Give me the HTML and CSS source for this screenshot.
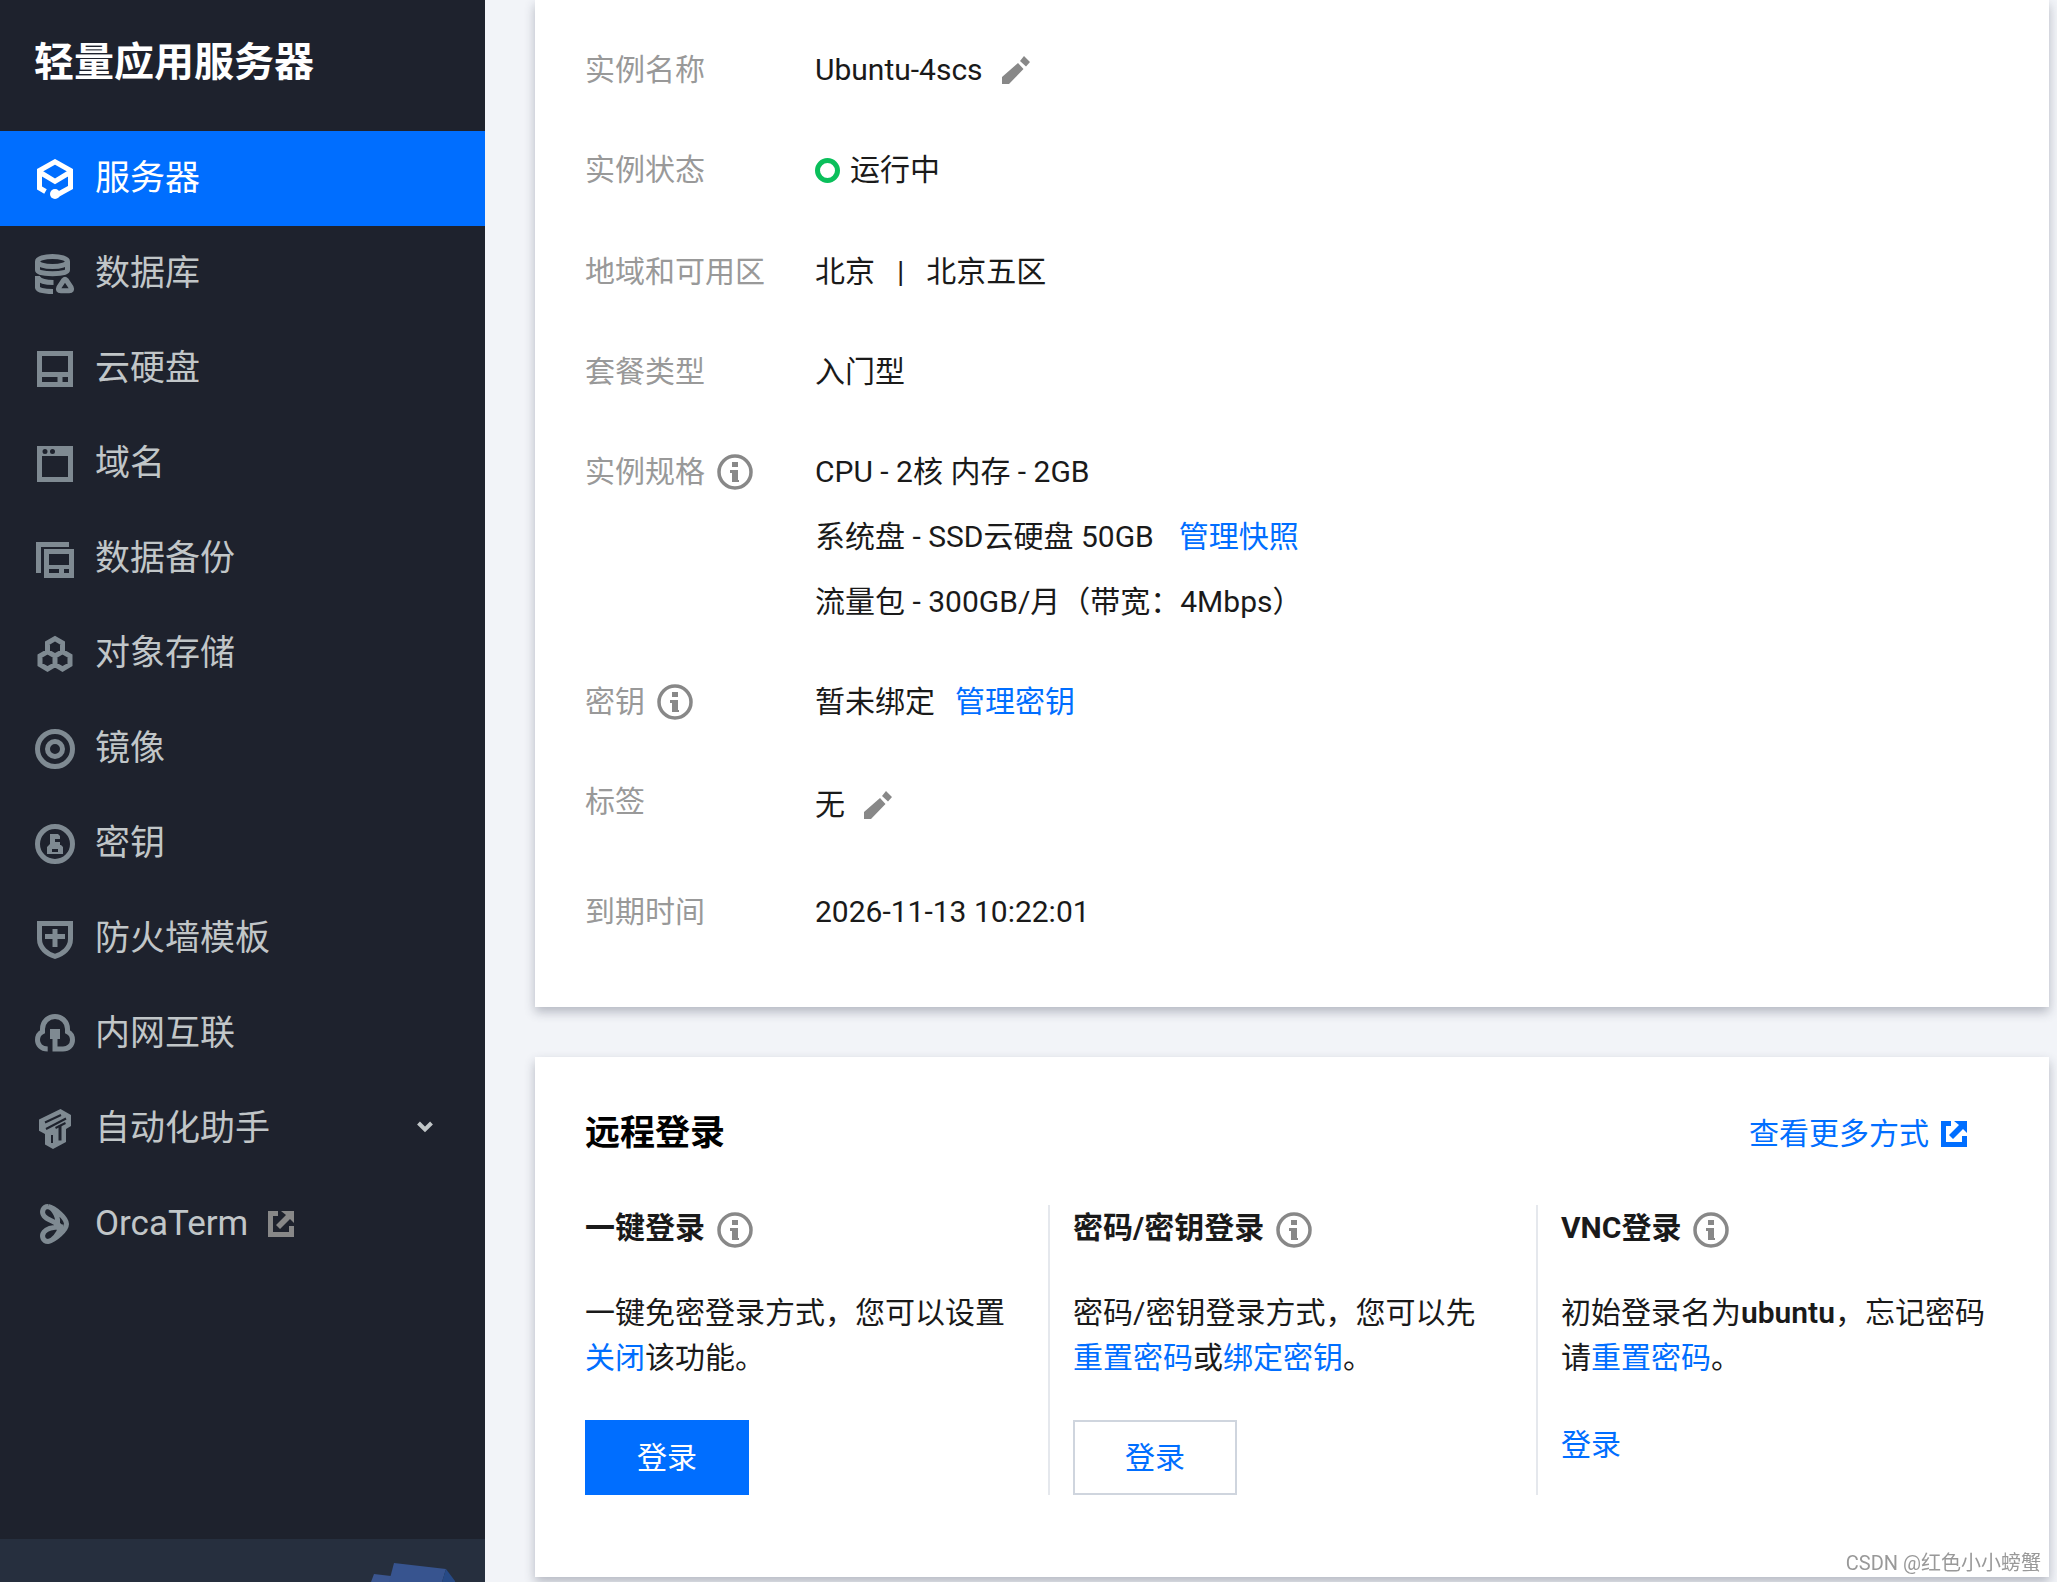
FILE: index.html
```html
<!DOCTYPE html>
<html lang="zh-CN">
<head>
<meta charset="utf-8">
<title>轻量应用服务器</title>
<link rel="stylesheet" href="styles.css">
</head>
<body>
<svg class="defs" aria-hidden="true">
  <symbol id="i-info" viewBox="0 0 40 40">
    <circle cx="20" cy="20" r="16" fill="none" stroke="currentColor" stroke-width="3.500"/>
    <path fill="currentColor" d="M17 10h6v5h-6zM15 18h8v10h1v2h-7v-9h-2z"/>
  </symbol>
  <symbol id="i-edit" viewBox="0 0 28 28">
    <path fill="currentColor" d="M0 21 16 7l5.500 6L7 28H0zM22 0l6 6-4 4.500L18 5z"/>
  </symbol>
  <symbol id="i-ext" viewBox="0 0 26 26">
    <path fill="currentColor" d="M0 0h10v5H5v16h16v-6h5v11H0zM13 0h13v12l-4-4-10 10-4-4L18 4z"/>
  </symbol>
</svg>

<div class="layout">
  <aside class="sidebar">
    <h1 class="sidebar-title">轻量应用服务器</h1>
    <nav class="menu">
      <a class="menu-item active" href="#">
        <svg class="menu-icon" viewBox="0 0 40 40"><path class="line" d="M10.500 32.500 4.500 29V11.500L20 2.800l15.500 8.700V28.500L21 36.500M4.500 13 20 22.300 35.500 13"/><circle class="solid" cx="20" cy="35" r="5"/></svg>
        <span>服务器</span>
      </a>
      <a class="menu-item" href="#">
        <svg class="menu-icon" viewBox="0 0 40 40"><ellipse class="line" cx="17.500" cy="7.500" rx="15" ry="5"/><path class="line" d="M2.500 7.500V16c0 2.200 6 3.700 15 3.700s15-1.500 15-3.700V7.500M2.500 22v11.500c0 2.500 6 4 15.500 4M3 24c2 3 8 4.500 15.500 4.500"/><path class="line round" d="M28.800 26q1.200-1.500 2.400 0l5 7.500q1.500 3.200-2 3.200H25.800q-3.500 0-2-3.200z"/></svg>
        <span>数据库</span>
      </a>
      <a class="menu-item" href="#">
        <svg class="menu-icon" viewBox="0 0 40 40"><path class="line" d="M4.500 4.500h31v31h-31zM4.500 25.500h31M25 25.500v10"/></svg>
        <span>云硬盘</span>
      </a>
      <a class="menu-item" href="#">
        <svg class="menu-icon" viewBox="0 0 40 40"><path class="solid" fill-rule="evenodd" d="M2 2h36v36H2zM7 12v21h26V12zM7.500 7.500a2.500 2.500 0 1 0 5 0 2.500 2.500 0 1 0-5 0M15 7.500a2.500 2.500 0 1 0 5 0 2.500 2.500 0 1 0-5 0"/></svg>
        <span>域名</span>
      </a>
      <a class="menu-item" href="#">
        <svg class="menu-icon" viewBox="0 0 40 40"><path class="solid" fill-rule="evenodd" d="M1 3h33v5H6v26H1zM9 10h30v29H9zM14 15v11h20V15zM14 30v4h10v-4zM29 30v4h5v-4z"/></svg>
        <span>数据备份</span>
      </a>
      <a class="menu-item" href="#">
        <svg class="menu-icon" viewBox="0 0 40 40"><path class="line" d="m20 4.700 7.500 4.300v8.600L20 22l-7.500-4.400V9zM12.500 17.600l7.500 4.400v8.600L12.500 35 5 30.600V22zM27.500 17.600 35 22v8.600L27.500 35 20 30.600V22z"/></svg>
        <span>对象存储</span>
      </a>
      <a class="menu-item" href="#">
        <svg class="menu-icon" viewBox="0 0 40 40"><circle class="line" cx="20" cy="20" r="17.500"/><circle class="line" cx="20" cy="20" r="7.500"/></svg>
        <span>镜像</span>
      </a>
      <a class="menu-item" href="#">
        <svg class="menu-icon" viewBox="0 0 40 40"><circle class="line" cx="20" cy="20" r="17.500"/><path class="solid" fill-rule="evenodd" d="M15 10h8l2 2v3h-5v3h5v3h1l2 2v7H12v-7l3-3zM17 25v3h6v-3z"/></svg>
        <span>密钥</span>
      </a>
      <a class="menu-item" href="#">
        <svg class="menu-icon" viewBox="0 0 40 40"><path class="line" d="M4.500 4.500h31V20c0 9-7.500 15-15.500 17.300C12 35 4.500 29 4.500 20zM10 17.500h20M20 10v18"/></svg>
        <span>防火墙模板</span>
      </a>
      <a class="menu-item" href="#">
        <svg class="menu-icon" viewBox="0 0 40 40"><path class="line" d="M12.700 35C6 35 2.500 30.500 2.500 26c0-4 2.500-7 5-8.200V15C7.500 8 13 2.500 20 2.500S32.500 8 32.500 15v2.800c2.500 1.200 5 4.200 5 8.200 0 5-4 9-9.500 9h-8V20"/><path class="solid" d="M15 15h10v10H15z"/></svg>
        <span>内网互联</span>
      </a>
      <a class="menu-item" href="#">
        <svg class="menu-icon" viewBox="0 0 40 40"><path class="solid" d="M21.500 0 32 6v11l-5 3v13l-13 7-8-4.500V25l-6-3.300V10.500z" transform="translate(4)"/><path class="cut" d="m10 13.500 16-7.500M11 20l20-10.500M20.500 19l10-5M17 26v8"/><path class="cut cut-wide" d="M25 16.500v15"/></svg>
        <span>自动化助手</span>
        <svg class="chevron" viewBox="0 0 16 16"><path d="m1.500 2 6.500 6.500L14.500 2"/></svg>
      </a>
      <a class="menu-item" href="#">
        <svg class="menu-icon" viewBox="0 0 40 40"><path class="line" d="M13 2.500C8 2.500 6 8 9 12c3 4 9 4.500 13 8 2-4-2-16-9-17.500C20 4 31.500 14 31.500 20S20 36 13 37.500c-5 0-7-5.500-4-9.500 3-4 9-5 16.500-5C24 30 18 37 13 37.500M21 19l5 4"/></svg>
        <span>OrcaTerm</span>
        <svg class="ext ext-muted"><use href="#i-ext"/></svg>
      </a>
    </nav>
    <div class="promo">
      <svg class="promo-art" viewBox="0 0 85 19"><path fill="#3b5690" d="m3 11 17 2v6H0z"/><path fill="#37548f" d="m23 0 52 6-4 13H18z"/><path fill="#274a86" d="m75 6 9 12v1H71z"/></svg>
    </div>
  </aside>

  <main class="content">
    <section class="card info-card">
      <dl class="info">
        <div class="row"><dt>实例名称</dt><dd><span>Ubuntu-4scs</span><button class="icon-btn" type="button" aria-label="编辑名称"><svg class="edit"><use href="#i-edit"/></svg></button></dd></div>
        <div class="row row-status"><dt>实例状态</dt><dd><i class="status-dot"></i><span>运行中</span></dd></div>
        <div class="row"><dt>地域和可用区</dt><dd><span>北京</span><span class="bar">|</span><span>北京五区</span></dd></div>
        <div class="row"><dt>套餐类型</dt><dd>入门型</dd></div>
        <div class="row"><dt>实例规格<svg class="tip"><use href="#i-info"/></svg></dt>
          <dd class="specs">
            <span>CPU - 2核 内存 - 2GB</span>
            <span>系统盘 - SSD云硬盘 50GB<a class="snapshot" href="#">管理快照</a></span>
            <span>流量包 - 300GB/月（带宽：4Mbps）</span>
          </dd></div>
        <div class="row"><dt>密钥<svg class="tip"><use href="#i-info"/></svg></dt><dd><span>暂未绑定</span><a class="key-link" href="#">管理密钥</a></dd></div>
        <div class="row row-tag"><dt>标签</dt><dd><span>无</span><button class="icon-btn" type="button" aria-label="编辑标签"><svg class="edit"><use href="#i-edit"/></svg></button></dd></div>
        <div class="row"><dt>到期时间</dt><dd>2026-11-13 10:22:01</dd></div>
      </dl>
    </section>

    <section class="card login-card">
      <header class="card-head">
        <h2>远程登录</h2>
        <a class="more" href="#">查看更多方式<svg class="ext"><use href="#i-ext"/></svg></a>
      </header>
      <div class="methods">
        <article class="method">
          <h3>一键登录<svg class="tip"><use href="#i-info"/></svg></h3>
          <p>一键免密登录方式，您可以设置<a href="#">关闭</a>该功能。</p>
          <button class="btn btn-primary" type="button">登录</button>
        </article>
        <article class="method">
          <h3>密码/密钥登录<svg class="tip"><use href="#i-info"/></svg></h3>
          <p>密码/密钥登录方式，您可以先<a href="#">重置密码</a>或<a href="#">绑定密钥</a>。</p>
          <button class="btn" type="button">登录</button>
        </article>
        <article class="method">
          <h3>VNC登录<svg class="tip"><use href="#i-info"/></svg></h3>
          <p>初始登录名为<b>ubuntu</b>，忘记密码<br>请<a href="#">重置密码</a>。</p>
          <a class="text-link" href="#">登录</a>
        </article>
      </div>
    </section>
  </main>
</div>
<div class="watermark">CSDN @红色小小螃蟹</div>
</body>
</html>
```

FILE: styles.css
```css
* { box-sizing: border-box; }

body {
  margin: 0;
  background: #f2f4f8;
  color: #1a1a1a;
  font: 30px/40px Roboto, "Noto Sans CJK SC", sans-serif;
}

h1, h2, h3, p, dl, dd { margin: 0; }
a { color: #006eff; text-decoration: none; }
svg { flex: none; }
.defs { position: absolute; width: 0; height: 0; }

.layout {
  display: flex;
  height: 100vh;
  overflow: hidden;
}

/* Sidebar */
.sidebar {
  flex: none;
  display: flex;
  flex-direction: column;
  width: 485px;
  background: #1e222d;
}
.sidebar-title {
  padding: 33px 34px 38px;
  color: #fff;
  font-size: 40px;
  line-height: 60px;
}
.menu { flex: 1; }
.menu-item {
  display: flex;
  align-items: center;
  gap: 20px;
  padding: 28px 52px 27px 35px;
  color: #c1c6c8;
  font-size: 35px;
  line-height: 40px;
}
.menu-item.active { background: #006eff; color: #fff; }
.menu-icon { width: 40px; height: 40px; color: #7f8a92; }
.active .menu-icon { color: #fff; }
.line { fill: none; stroke: currentColor; stroke-width: 5; }
.round { stroke-linejoin: round; }
.solid { fill: currentColor; }
.cut { fill: none; stroke: #1e222d; stroke-width: 2; }
.cut-wide { stroke-width: 3; }
.chevron { width: 16px; height: 16px; margin-left: auto; }
.chevron path { fill: none; stroke: #c1c6c8; stroke-width: 4; }
.ext { width: 26px; height: 26px; }
.ext-muted { color: #888; }
.promo {
  display: flex;
  justify-content: flex-end;
  align-items: flex-end;
  height: 43px;
  padding-right: 29px;
  background: #262f3e;
}
.promo-art { width: 85px; height: 19px; }

/* Content */
.content { flex: 1; padding: 0 8px 0 50px; }
.card {
  background: #fff;
  box-shadow: 0 5px 10px rgba(54, 58, 80, .32);
}
.info-card { padding: 50px 50px 75px; margin-bottom: 50px; }

.row { display: flex; margin-bottom: 60px; }
.row:last-child { margin-bottom: 0; }
.row dt {
  flex: none;
  display: flex;
  align-items: center;
  align-self: flex-start;
  width: 230px;
  color: #999;
}
.row dd { display: flex; align-items: center; }
.row-status { margin-bottom: 62px; }
.row-tag { margin-bottom: 64px; }
.row-tag dd { line-height: 46px; }
.tip { width: 40px; height: 40px; margin-left: 10px; color: #888; }
.icon-btn {
  display: flex;
  margin-left: 19px;
  padding: 0;
  border: 0;
  background: none;
  color: #888;
}
.edit { width: 28px; height: 28px; }
.status-dot {
  width: 25px;
  height: 25px;
  margin-right: 10px;
  border: 5px solid #0abf5b;
  border-radius: 50%;
}
.bar { margin: 0 22px; }
.row .specs { flex-direction: column; align-items: flex-start; gap: 25px; }
.snapshot { margin-left: 25px; }
.key-link { margin-left: 20px; }

.login-card { padding: 51px 25px 82px; }
.card-head {
  display: flex;
  justify-content: space-between;
  align-items: center;
  margin-bottom: 45px;
  padding: 0 57px 0 25px;
}
.card-head h2 { color: #000; font-size: 35px; line-height: 52px; }
.more { display: flex; align-items: center; gap: 12px; }

.methods { display: grid; grid-template-columns: repeat(3, 1fr); }
.method {
  padding: 0 35px 0 23px;
  border-left: 2px solid #e5e8ed;
  line-height: 45px;
}
.method:first-child { border-color: transparent; }
.method h3 {
  display: flex;
  align-items: center;
  height: 45px;
  margin-bottom: 40px;
  font-size: 30px;
}
.method h3 .tip { margin-top: 5px; }
.method p { margin-bottom: 40px; }
.method b { font-weight: 600; }
.btn {
  display: block;
  min-width: 164px;
  height: 75px;
  border: 2px solid #cfd5de;
  background: #fff;
  color: #006eff;
  font: inherit;
}
.btn-primary { border-color: #006eff; background: #006eff; color: #fff; }
.text-link { line-height: 50px; }

.watermark {
  position: fixed;
  right: 16px;
  bottom: 4px;
  color: #999;
  font-size: 20px;
  line-height: 30px;
  text-shadow: 1px 1px #fff;
}
```
